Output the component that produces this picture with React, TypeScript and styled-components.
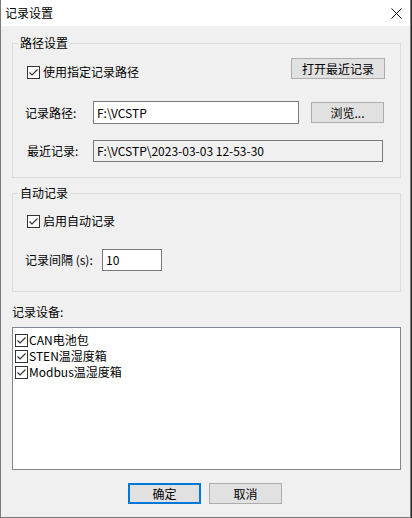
import React, { useState } from 'react'
import styled, { createGlobalStyle, css } from 'styled-components'

const GlobalStyle = createGlobalStyle`
  html, body {
    margin: 0;
    padding: 0;
    background: #2b2b2b;
  }
  body {
    font-family: "Noto Sans CJK SC", "Liberation Sans", sans-serif;
    font-size: 12px;
    color: #000;
  }
`;

interface Device {
  id: string;
  name: string;
  checked: boolean;
}

const initialDevices: Device[] = [
  { id: 'can', name: 'CAN电池包', checked: true },
  { id: 'sten', name: 'STEN温湿度箱', checked: true },
  { id: 'modbus', name: 'Modbus温湿度箱', checked: true },
];

function CheckBox({ checked, onToggle }: { checked: boolean; onToggle?: () => void }) {
  return (
    <Box onClick={onToggle}>
      {checked && (
        <svg width="11" height="11" viewBox="0 0 11 11">
          <polyline points="1.5,5.5 4,8 9.5,2.5" fill="none" stroke="#333" strokeWidth="1.2" />
        </svg>
      )}
    </Box>
  );
}

export default function App() {
  const [usePath, setUsePath] = useState(true);
  const [autoRecord, setAutoRecord] = useState(true);
  const [devices, setDevices] = useState(initialDevices);

  const toggleDevice = (id: string) => {
    setDevices(devices.map(d => d.id === id ? { ...d, checked: !d.checked } : d));
  };

  return (
    <>
      <GlobalStyle />
      <Window>
        <TitleBar>
          <Title>记录设置</Title>
          <CloseIcon width="11" height="11" viewBox="0 0 11 11">
            <path d="M0.5 0.5 L10.5 10.5 M10.5 0.5 L0.5 10.5" stroke="#111" strokeWidth="1" fill="none" />
          </CloseIcon>
        </TitleBar>
        <Client>
          <Group>
            <Legend>路径设置</Legend>
            <TopRow>
              <CheckLabel>
                <CheckBox checked={usePath} onToggle={() => setUsePath(!usePath)} />
                使用指定记录路径
              </CheckLabel>
              <Button width={94}>打开最近记录</Button>
            </TopRow>
            <FieldRow gap={22}>
              <FieldLabel indent={12} width={68}>记录路径:</FieldLabel>
              <TextInput width={206} height={23}>F:\VCSTP</TextInput>
              <Button width={73} style={{ marginLeft: 12 }}>浏览...</Button>
            </FieldRow>
            <FieldRow gap={16}>
              <FieldLabel indent={14} width={66}>最近记录:</FieldLabel>
              <TextInput width={290} height={22} readOnly>F:\VCSTP\2023-03-03 12-53-30</TextInput>
            </FieldRow>
          </Group>

          <Group second>
            <Legend>自动记录</Legend>
            <AutoRow>
              <CheckLabel>
                <CheckBox checked={autoRecord} onToggle={() => setAutoRecord(!autoRecord)} />
                启用自动记录
              </CheckLabel>
            </AutoRow>
            <FieldRow gap={20}>
              <FieldLabel indent={12} width={77}>记录间隔 (s):</FieldLabel>
              <TextInput width={60} height={22}>10</TextInput>
            </FieldRow>
          </Group>

          <SectionLabel>记录设备:</SectionLabel>
          <DeviceList>
            {devices.map(d => (
              <DeviceRow key={d.id}>
                <CheckBox checked={d.checked} onToggle={() => toggleDevice(d.id)} />
                {d.name}
              </DeviceRow>
            ))}
          </DeviceList>

          <Footer>
            <Button width={73} primary>确定</Button>
            <Button width={73}>取消</Button>
          </Footer>
        </Client>
      </Window>
    </>
  );
}

const Window = styled.div`
  width: 409px;
  height: 517px;
  background: #f0f0f0;
  border: 1px solid #7a7a7a;
  border-top: none;
  display: flex;
  flex-direction: column;
`;

const TitleBar = styled.div`
  height: 26px;
  background: #fff;
  display: flex;
  align-items: center;
  justify-content: space-between;
  padding: 0 8px 0 4px;
`;

const Title = styled.span`
  line-height: 14px;
  margin-top: -1px;
`;

const CloseIcon = styled.svg`
  display: block;
  margin-top: 1px;
`;

const Client = styled.div`
  padding: 10px 9px 0 11px;
  display: flex;
  flex-direction: column;
`;

const Group = styled.fieldset<{ second?: boolean }>`
  margin: ${p => p.second ? '8px 0 0' : '0'};
  padding: ${p => p.second ? '0 0 20px' : '8px 0 15px'};
  width: 389px;
  box-sizing: border-box;
  min-width: 0;
  border: 1px solid #dcdcdc;
`;

const Legend = styled.legend`
  margin-left: 5px;
  padding: 0 2px;
  line-height: 14px;
`;

const TopRow = styled.div`
  display: flex;
  align-items: flex-end;
  justify-content: space-between;
  padding: 0 15px 0 14px;
`;

const AutoRow = styled.div`
  display: flex;
  padding: 13px 0 0 14px;
  height: 16px;
  align-items: center;
`;

const CheckLabel = styled.label`
  display: flex;
  align-items: center;
  gap: 3px;
  line-height: 14px;
  height: 14px;
`;

const Box = styled.span`
  width: 11px;
  height: 11px;
  border: 1px solid #333;
  background: #fff;
  display: inline-flex;
  flex: 0 0 auto;
  svg {
    display: block;
  }
`;

const FieldRow = styled.div<{ gap: number }>`
  display: flex;
  align-items: center;
  margin-top: ${p => p.gap}px;
`;

const FieldLabel = styled.span<{ indent: number; width: number }>`
  margin-left: ${p => p.indent}px;
  width: ${p => p.width}px;
  line-height: 14px;
`;

const TextInput = styled.div<{ width: number; height: number; readOnly?: boolean }>`
  width: ${p => p.width}px;
  height: ${p => p.height}px;
  box-sizing: border-box;
  border: 1px solid #7a7a7a;
  background: ${p => p.readOnly ? '#f0f0f0' : '#fff'};
  padding-left: 3px;
  display: flex;
  align-items: center;
  line-height: 14px;
  white-space: nowrap;
`;

const Button = styled.button<{ width: number; primary?: boolean }>`
  width: ${p => p.width}px;
  height: 21px;
  box-sizing: border-box;
  margin: 0;
  padding: 0;
  font: inherit;
  line-height: 14px;
  color: #000;
  background: #e1e1e1;
  border: 1px solid #adadad;
  border-radius: 0;
  ${p => p.primary && css`
    border: 2px solid #0078d7;
  `}
`;

const SectionLabel = styled.div`
  margin-top: 13px;
  line-height: 14px;
`;

const DeviceList = styled.div`
  margin-top: 8px;
  width: 389px;
  height: 143px;
  box-sizing: border-box;
  border: 1px solid #828790;
  background: #fff;
  padding: 4px 0 0 2px;
`;

const DeviceRow = styled.div`
  display: flex;
  align-items: center;
  gap: 1px;
  height: 16px;
  line-height: 14px;
`;

const Footer = styled.div`
  margin-top: 13px;
  padding-right: 3px;
  display: flex;
  justify-content: center;
  gap: 8px;
`;
